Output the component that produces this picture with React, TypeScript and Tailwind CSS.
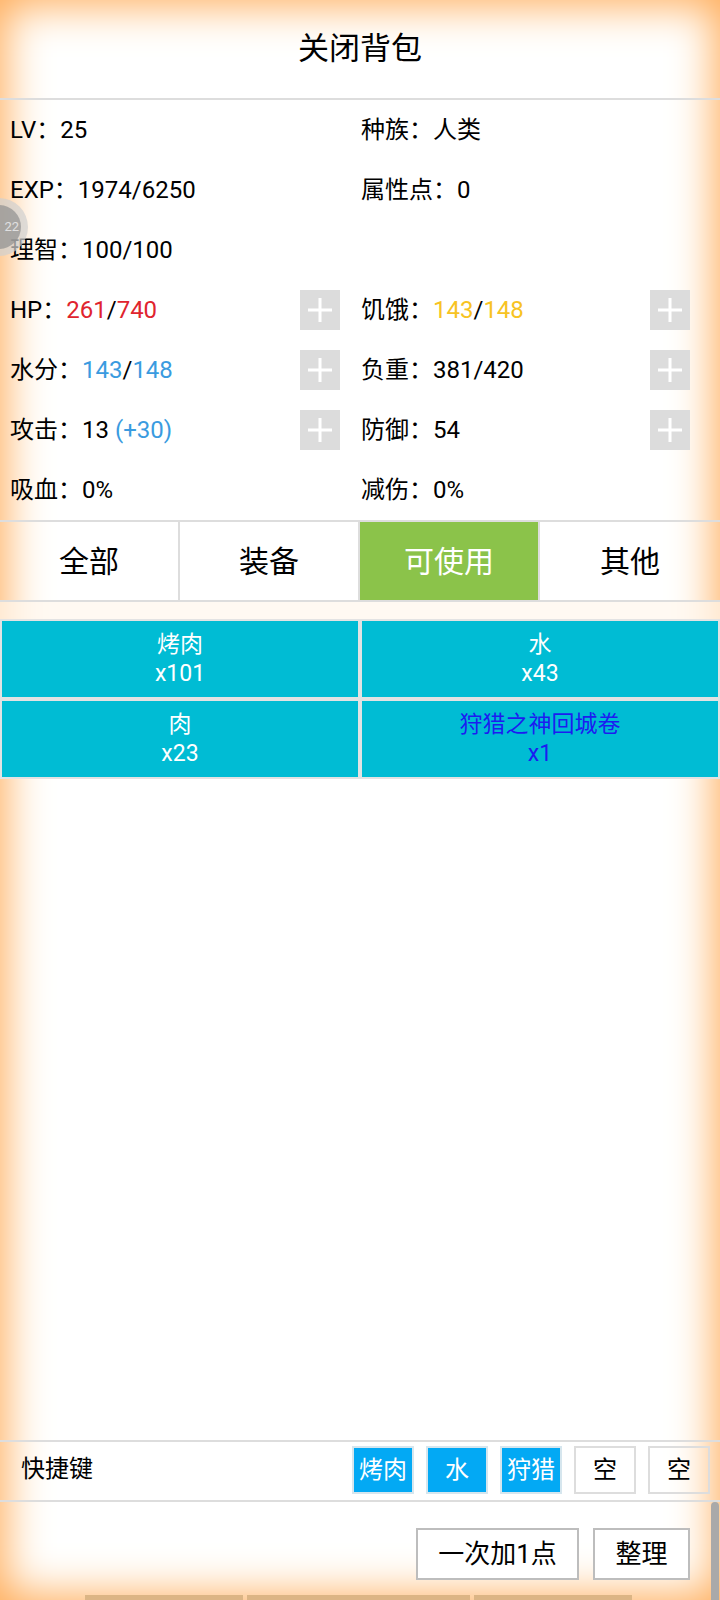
import React from "react";

const font = { fontFamily: 'Roboto, "Noto Sans CJK SC", sans-serif' };

type Stat = {
  label: string;
  value?: React.ReactNode;
  plus?: boolean;
};

const red = "text-[#e0242e]";
const blue = "text-[#3a9be0]";
const yellow = "text-[#f7c323]";

const leftStats: Stat[] = [
  { label: "LV", value: "25" },
  { label: "EXP", value: "1974/6250" },
  { label: "理智", value: "100/100" },
  {
    label: "HP",
    value: (
      <>
        <span className={red}>261</span>/<span className={red}>740</span>
      </>
    ),
    plus: true,
  },
  {
    label: "水分",
    value: (
      <>
        <span className={blue}>143</span>/<span className={blue}>148</span>
      </>
    ),
    plus: true,
  },
  {
    label: "攻击",
    value: (
      <>
        13 <span className={blue}>(+30)</span>
      </>
    ),
    plus: true,
  },
  { label: "吸血", value: "0%" },
];

const rightStats: Stat[] = [
  { label: "种族", value: "人类" },
  { label: "属性点", value: "0" },
  { label: "" },
  {
    label: "饥饿",
    value: (
      <>
        <span className={yellow}>143</span>/<span className={yellow}>148</span>
      </>
    ),
    plus: true,
  },
  { label: "负重", value: "381/420", plus: true },
  { label: "防御", value: "54", plus: true },
  { label: "减伤", value: "0%" },
];

const tabs = ["全部", "装备", "可使用", "其他"];

const items = [
  { name: "烤肉", count: "x101" },
  { name: "水", count: "x43" },
  { name: "肉", count: "x23" },
  { name: "狩猎之神回城卷", count: "x1", special: true },
];

const quickKeys = [
  { name: "烤肉", on: true },
  { name: "水", on: true },
  { name: "狩猎", on: true },
  { name: "空", on: false },
  { name: "空", on: false },
];

function PlusButton() {
  return (
    <div className="w-[40px] h-[40px] bg-[#dcdcdc] flex items-center justify-center shrink-0">
      <svg width="26" height="26" viewBox="0 0 26 26">
        <rect x="11.5" y="1" width="3" height="24" fill="#fff" />
        <rect x="1" y="11.5" width="24" height="3" fill="#fff" />
      </svg>
    </div>
  );
}

function StatCell({ stat, className }: { stat: Stat; className: string }) {
  return (
    <div className={`h-[60px] flex items-center justify-between ${className}`}>
      <div className="text-[24px] text-black whitespace-nowrap">
        {stat.label && (
          <>
            {stat.label}：{stat.value}
          </>
        )}
      </div>
      {stat.plus && <PlusButton />}
    </div>
  );
}

export default function App() {
  return (
    <div
      style={font}
      className="relative w-[720px] h-[1600px] overflow-hidden bg-white shadow-[inset_0_0_44px_5px_#ffab55] flex flex-col"
    >
      {/* floating ball */}
      <div className="absolute left-[-30px] top-[198px] w-[58px] h-[58px] rounded-full bg-[#d0d0d0]/70 flex items-center justify-center">
        <div className="w-[44px] h-[44px] rounded-full bg-[#909090]/70 flex items-center justify-end pr-[2px] text-[13px] text-[#e0e0e0]">
          22
        </div>
      </div>

      {/* header */}
      <div className="h-[98px] flex items-center justify-center text-[31px] text-black">
        关闭背包
      </div>
      <div className="h-[2px] bg-[#dddddd]" />

      {/* stats */}
      <div className="grid grid-cols-2">
        <div className="flex flex-col">
          {leftStats.map((s, i) => (
            <StatCell key={i} stat={s} className="pl-[10px] pr-[20px]" />
          ))}
        </div>
        <div className="flex flex-col">
          {rightStats.map((s, i) => (
            <StatCell key={i} stat={s} className="pl-[1px] pr-[30px]" />
          ))}
        </div>
      </div>
      <div className="h-[2px] bg-[#dddddd]" />

      {/* tabs */}
      <div className="grid grid-cols-4 h-[78px]">
        {tabs.map((t, i) => (
          <div
            key={t}
            className={`flex items-center justify-center text-[30px] ${
              i < 3 ? "border-r-2 border-[#dddddd]" : ""
            } ${i === 2 ? "bg-[#8bc34a] text-white" : "text-black"}`}
          >
            {t}
          </div>
        ))}
      </div>
      <div className="h-[2px] bg-[#dddddd]" />
      <div className="h-[17px] bg-[#fff6ec]/70" />

      {/* items */}
      <div className="grid grid-cols-2 gap-[4px] p-[2px] bg-[#e3e3e3]">
        {items.map((it) => (
          <div
            key={it.name}
            className={`h-[76px] bg-[#00bcd4] flex flex-col items-center justify-center text-[23px] leading-[29px] ${
              it.special ? "text-[#1c1cf0]" : "text-white"
            }`}
          >
            <div>{it.name}</div>
            <div>{it.count}</div>
          </div>
        ))}
      </div>

      <div className="flex-1" />

      {/* quick keys */}
      <div className="h-[2px] bg-[#dddddd]" />
      <div className="h-[58px] flex items-start justify-between pl-[21px] pr-[10px]">
        <div className="text-[24px] text-black pt-[9px]">快捷键</div>
        <div className="flex gap-[12px] pt-[4px]">
          {quickKeys.map((q, i) => (
            <div
              key={i}
              className={`w-[62px] h-[48px] border-2 flex items-center justify-center text-[24px] ${
                q.on
                  ? "bg-[#03a9f4] border-[#d6e6ee] text-white"
                  : "bg-transparent border-[#dddddd] text-black"
              }`}
            >
              {q.name}
            </div>
          ))}
        </div>
      </div>
      <div className="h-[2px] bg-[#dddddd]" />

      {/* bottom buttons */}
      <div className="h-[98px] flex items-start justify-end gap-[14px] pr-[30px] pt-[26px]">
        <div className="w-[163px] h-[52px] border-2 border-[#bdbdbd] bg-white flex items-center justify-center text-[26px] text-black">
          一次加1点
        </div>
        <div className="w-[97px] h-[52px] border-2 border-[#bdbdbd] bg-white flex items-center justify-center text-[26px] text-black">
          整理
        </div>
      </div>

      {/* bottom nav peek */}
      <div className="absolute bottom-0 left-[85px] flex gap-[4px] h-[5px]">
        <div className="w-[158px] bg-[#dcb585]" />
        <div className="w-[223px] bg-[#dcb585]" />
        <div className="w-[158px] bg-[#dcb585]" />
      </div>

      {/* scrollbar */}
      <div className="absolute right-[1px] top-[1502px] w-[8px] h-[110px] rounded-full bg-[#a9a9a9]" />
    </div>
  );
}
